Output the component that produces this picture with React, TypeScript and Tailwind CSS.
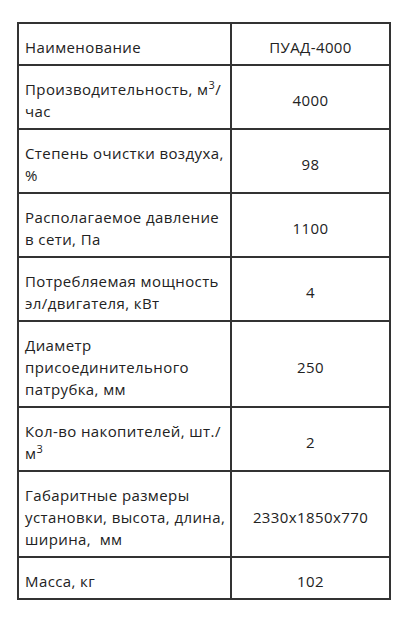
import React from 'react';

interface Row {
  label: React.ReactNode;
  value: string;
}

const Cube = () => (
  <span className="whitespace-nowrap">
    м<span className="relative -top-[6px] text-[11px] leading-none">3</span>
  </span>
);

const rows: Row[] = [
  { label: 'Наименование', value: 'ПУАД-4000' },
  {
    label: (
      <>
        Производительность, <span className="whitespace-nowrap"><Cube />/</span> час
      </>
    ),
    value: '4000',
  },
  { label: 'Степень очистки воздуха, %', value: '98' },
  { label: 'Располагаемое давление в сети, Па', value: '1100' },
  { label: 'Потребляемая мощность эл/двигателя, кВт', value: '4' },
  { label: 'Диаметр присоединительного патрубка, мм', value: '250' },
  {
    label: (
      <>
        Кол-во накопителей, шт./ <Cube />
      </>
    ),
    value: '2',
  },
  { label: 'Габаритные размеры установки, высота, длина, ширина,\u00a0 мм', value: '2330x1850x770' },
  { label: 'Масса, кг', value: '102' },
];

const App: React.FC = () => {
  return (
    <div className="min-h-screen bg-white pt-[22px] pl-[17px]">
      <table
        className="border-collapse text-[#222] text-[15px] leading-[22px] tracking-[0.4px]"
        style={{ fontFamily: '"Open Sans", sans-serif' }}
      >
        <tbody>
          {rows.map((row, i) => (
            <tr key={i}>
              <td className="w-[213px] border-2 border-[#333] pl-[6px] pr-1 pt-[12px] pb-[6px] align-middle">
                {row.label}
              </td>
              <td className="w-[159px] border-2 border-[#333] px-2 pt-[12px] pb-[6px] text-center align-middle">
                {row.value}
              </td>
            </tr>
          ))}
        </tbody>
      </table>
    </div>
  );
};

export default App;
